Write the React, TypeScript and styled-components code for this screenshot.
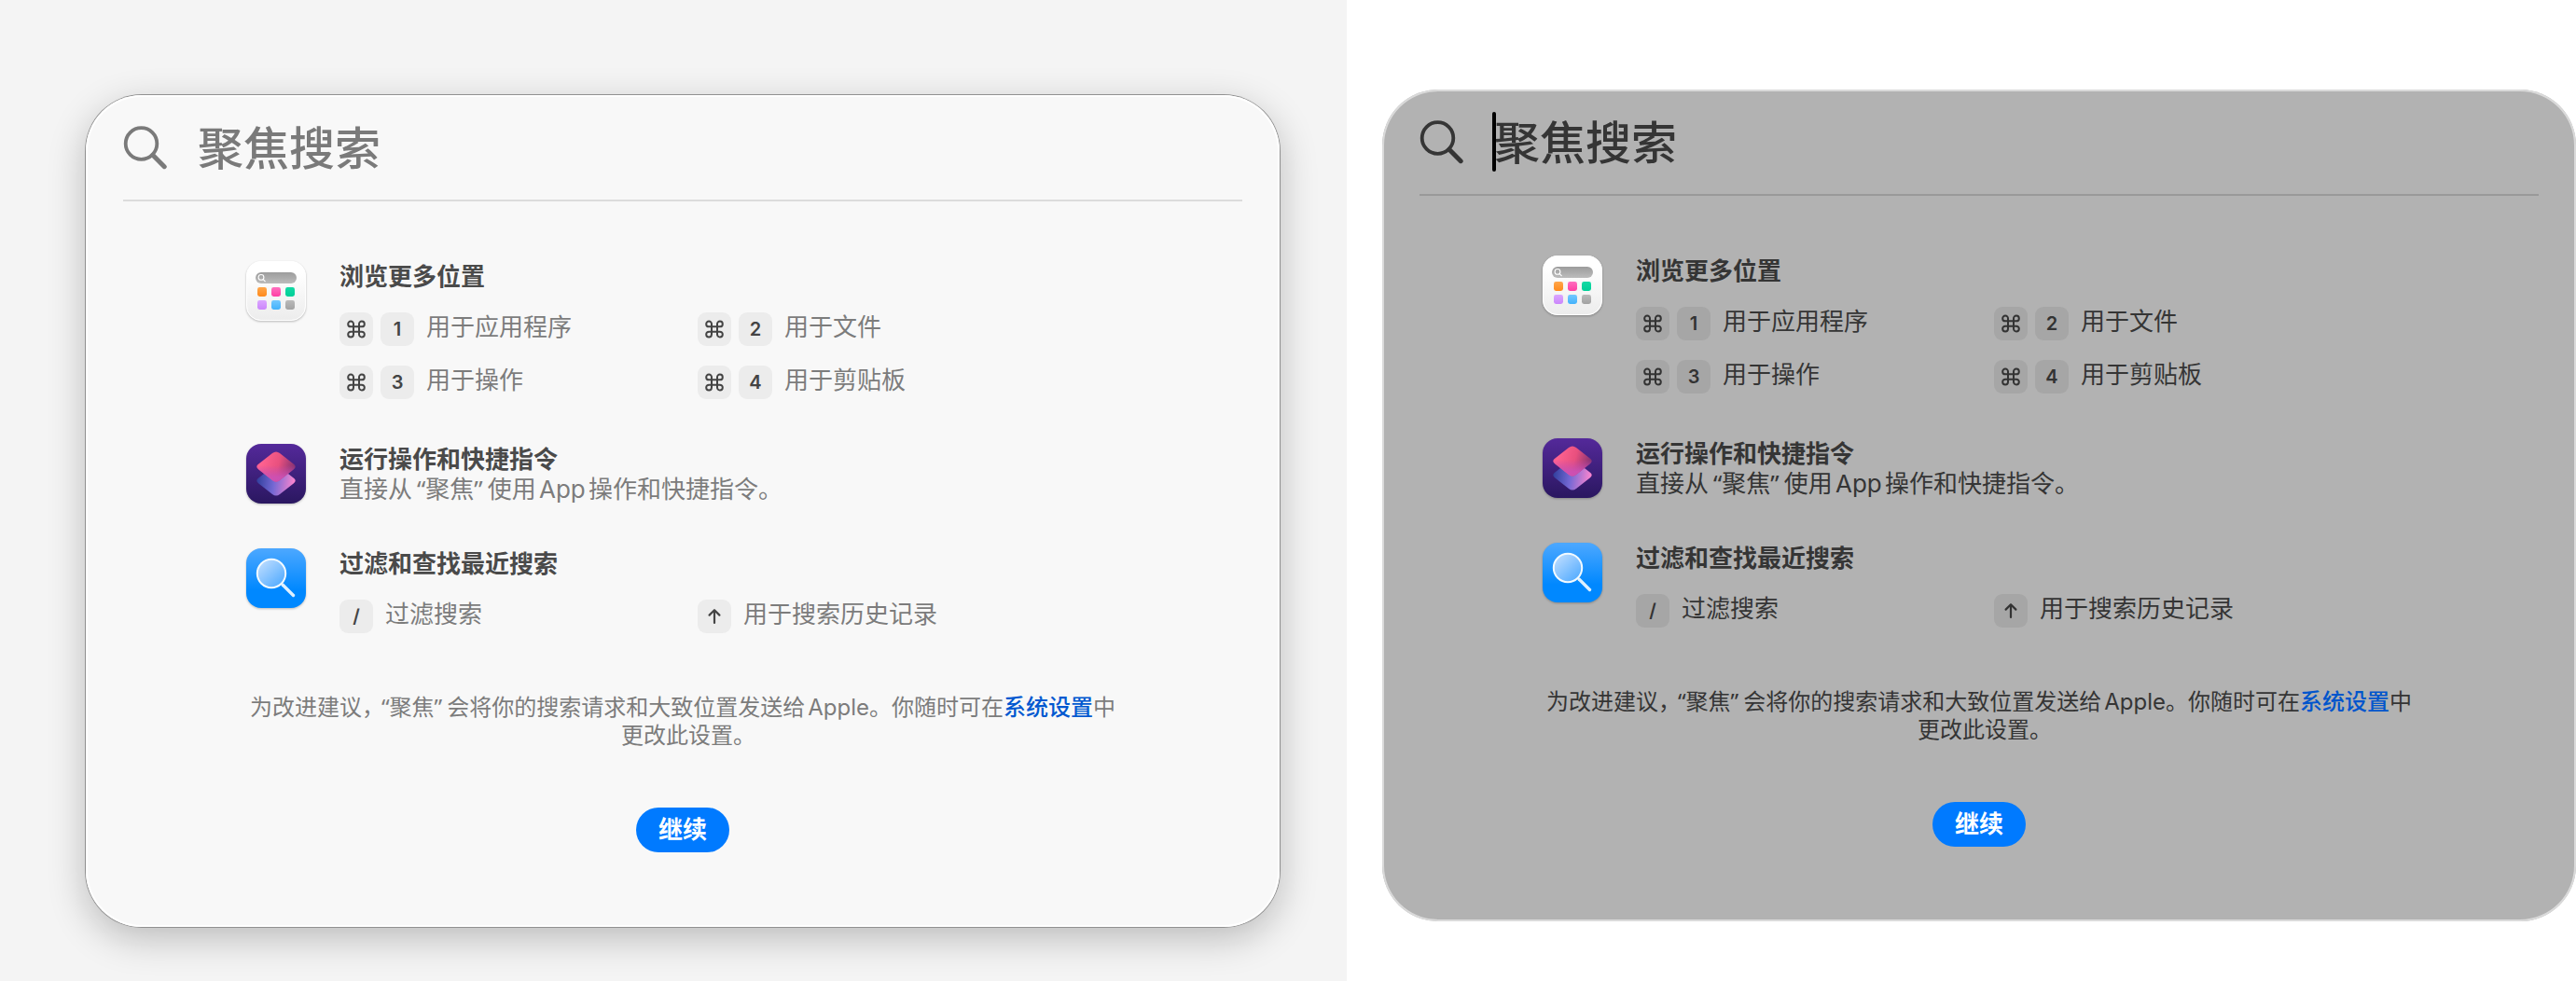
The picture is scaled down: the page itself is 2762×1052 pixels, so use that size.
import React, { useId } from "react";
import styled, { createGlobalStyle, css, ThemeProvider } from "styled-components";

type Tone = {
  pane: string;
  surface: string;
  shadow: string;
  title: string;
  text: string;
  search: string;
  rule: string;
  key: string;
  keyText: string;
  link: string;
};

const light: Tone = {
  pane: "#f4f4f4",
  surface: "#f8f8f8",
  shadow:
    "inset 0 0 0 2px #ffffff, 0 0 0 1px #909090, 0 12px 40px rgba(0, 0, 0, 0.24)",
  title: "#4a4a4a",
  text: "#7c7c7c",
  search: "#7a7a7a",
  rule: "#dcdcdc",
  key: "#ececec",
  keyText: "#444444",
  link: "#0058d0",
};

const dim: Tone = {
  pane: "#ffffff",
  surface: "#b2b2b2",
  shadow: "inset 0 0 0 2px #dadada",
  title: "#353535",
  text: "#353535",
  search: "#353535",
  rule: "#999999",
  key: "#a6a6a6",
  keyText: "#333333",
  link: "#0055cc",
};

const GlobalStyle = createGlobalStyle`
  *, *::before, *::after { box-sizing: border-box; }
  body {
    margin: 0;
    font-family: Inter, "Noto Sans CJK SC", sans-serif;
    text-autospace: normal;
  }
  h2, p, ul { margin: 0; padding: 0; }
`;

const Page = styled.main`
  display: grid;
  grid-template-columns: 1444fr 1318fr;
  min-height: 100vh;
`;

const Pane = styled.section<{ $inset: string }>`
  padding: ${(p) => p.$inset};
  background: ${(p) => (p.theme as Tone).pane};
`;

const Panel = styled.div`
  padding: 0 40px 80px;
  border-radius: 60px;
  background: ${(p) => (p.theme as Tone).surface};
  box-shadow: ${(p) => (p.theme as Tone).shadow};
`;

const SearchBar = styled.label`
  display: flex;
  align-items: center;
  gap: 30px;
  height: 114px;
  border-bottom: 2px solid ${(p) => (p.theme as Tone).rule};
  color: ${(p) => (p.theme as Tone).search};
`;

const Field = styled.span<{ $caret: boolean }>`
  position: relative;
  flex: 1;
  padding-left: 2px;
  ${(p) =>
    p.$caret &&
    css`
      &::before {
        content: "";
        position: absolute;
        top: 0;
        left: 0;
        width: 4px;
        height: 64px;
        border-radius: 2px;
        background: #000000;
      }
    `}
`;

const SearchInput = styled.input`
  display: block;
  width: 100%;
  height: 64px;
  padding: 2px 0 0;
  border: 0;
  outline: 0;
  background: transparent;
  color: inherit;
  font: 500 49px/62px Inter, "Noto Sans CJK SC", sans-serif;
  &::placeholder {
    color: inherit;
    opacity: 1;
  }
`;

const Content = styled.div`
  display: flex;
  flex-direction: column;
  align-items: center;
  max-width: 936px;
  margin: 0 auto;
  padding-top: 64px;
`;

const Sections = styled.div`
  display: flex;
  flex-direction: column;
  gap: 48px;
  width: 100%;
`;

const Section = styled.article`
  display: flex;
  gap: 36px;
`;

const SectionBody = styled.div`
  flex: 1;
`;

const Title = styled.h2`
  color: ${(p) => (p.theme as Tone).title};
  font-size: 26px;
  font-weight: 700;
  line-height: 34px;
`;

const Description = styled.p`
  color: ${(p) => (p.theme as Tone).text};
  font-size: 26px;
  line-height: 30px;
`;

const Shortcuts = styled.ul`
  display: grid;
  grid-template-columns: repeat(2, 384px);
  row-gap: 21px;
  margin-top: 21px;
  list-style: none;
`;

const Shortcut = styled.li`
  display: flex;
  gap: 8px;
  height: 36px;
`;

const Key = styled.kbd`
  display: flex;
  align-items: center;
  justify-content: center;
  width: 36px;
  height: 36px;
  border-radius: 9px;
  background: ${(p) => (p.theme as Tone).key};
  color: ${(p) => (p.theme as Tone).keyText};
  font: 600 20px/36px Inter, sans-serif;
`;

const ShortcutLabel = styled.span`
  margin-left: 5px;
  color: ${(p) => (p.theme as Tone).text};
  font-size: 26px;
  line-height: 32px;
`;

const Notice = styled.p`
  margin-top: 65px;
  color: ${(p) => (p.theme as Tone).text};
  font-size: 24px;
  line-height: 30px;
  text-align: center;
`;

const Quoted = styled.span`
  margin: 0 5px;
  font-family: "Noto Sans", "Noto Sans CJK SC", sans-serif;
  line-height: 1;
`;

const HalfWidth = styled.span`
  font-family: "Noto Sans CJK SC", sans-serif;
  font-feature-settings: "halt";
  line-height: 1;
`;

const Comma = styled(HalfWidth)`
  margin-right: 4px;
`;

const SettingsLink = styled.a`
  color: ${(p) => (p.theme as Tone).link};
  font-weight: 500;
  text-decoration: none;
`;

const ContinueButton = styled.button`
  width: 100px;
  height: 48px;
  margin-top: 62px;
  padding: 0;
  border: 0;
  border-radius: 24px;
  background: #007aff;
  color: #ffffff;
  font: 700 26px/48px Inter, "Noto Sans CJK SC", sans-serif;
`;

const AppIcon = styled.svg`
  flex: none;
  display: block;
  width: 64px;
  height: 64px;
  overflow: visible;
  filter: drop-shadow(0 1px 1px rgba(0, 0, 0, 0.25));
`;

const SearchGlyph = () => (
  <svg width="48" height="48" viewBox="0 0 48 48" fill="none" stroke="currentColor" aria-hidden="true">
    <circle cx="19.5" cy="20" r="16.8" strokeWidth="3.8" />
    <path d="M31.8 32.3 44.2 44.7" strokeWidth="5" strokeLinecap="round" />
  </svg>
);

const CommandGlyph = () => (
  <svg width="24" height="24" viewBox="0 0 24 24" fill="none" stroke="currentColor" strokeWidth="2" aria-label="Command">
    <path d="M15 6.4v11.2a2.9 2.9 0 1 0 2.9-2.9H6.1a2.9 2.9 0 1 0 2.9 2.9V6.4a2.9 2.9 0 1 0-2.9 2.9h11.8A2.9 2.9 0 1 0 15 6.4" />
  </svg>
);

const UpGlyph = () => (
  <svg width="16" height="18" viewBox="0 0 16 18" fill="none" stroke="currentColor" strokeWidth="2.2" strokeLinecap="round" strokeLinejoin="round" aria-label="Up">
    <path d="M8 16V2.4M2.6 7.6 8 2.2l5.4 5.4" />
  </svg>
);

const tiles = [
  { x: 12, y: 28, from: "#ffa64a", to: "#ff8a1c" },
  { x: 27, y: 28, from: "#ff6fbf", to: "#ff3fa4" },
  { x: 42, y: 28, from: "#14d9a4", to: "#00cf98" },
  { x: 12, y: 42, from: "#dba6ff", to: "#cb86fb" },
  { x: 27, y: 42, from: "#74c8ff", to: "#43b2fb" },
  { x: 42, y: 42, from: "#bababa", to: "#a2a2a2" },
];

const LauncherIcon = () => {
  const id = useId();
  return (
    <AppIcon viewBox="0 0 64 64" aria-hidden="true">
      <defs>
        <linearGradient id={id + "bg"} x1="0" y1="0" x2="0" y2="1">
          <stop offset="0.2" stopColor="#ffffff" />
          <stop offset="1" stopColor="#ececec" />
        </linearGradient>
        <linearGradient id={id + "bar"} x1="0" y1="0" x2="0" y2="1">
          <stop offset="0" stopColor="#9c9c9c" />
          <stop offset="1" stopColor="#bcbcbc" />
        </linearGradient>
        {tiles.map((t, i) => (
          <linearGradient key={i} id={id + i} x1="0" y1="0" x2="0" y2="1">
            <stop offset="0" stopColor={t.from} />
            <stop offset="1" stopColor={t.to} />
          </linearGradient>
        ))}
      </defs>
      <rect width="64" height="64" rx="16" fill={`url(#${id}bg)`} />
      <rect x="0.5" y="0.5" width="63" height="63" rx="15.5" fill="none" stroke="#ffffff" />
      <rect x="10" y="12" width="44" height="12" rx="6" fill={`url(#${id}bar)`} />
      <circle cx="16" cy="17.4" r="2.9" fill="none" stroke="#ffffff" strokeWidth="1.1" />
      <path d="m18.2 19.6 2 2" stroke="#ffffff" strokeWidth="1.2" strokeLinecap="round" />
      {tiles.map((t, i) => (
        <rect key={i} x={t.x} y={t.y} width="10" height="10" rx="2.4" fill={`url(#${id}${i})`} />
      ))}
    </AppIcon>
  );
};

const ShortcutsIcon = () => {
  const id = useId();
  const upper =
    "M36 10 51 21.800q3.400 2.700 0 5.400L36 39q-4 3.200-8 0L13 27.200q-3.400-2.700 0-5.400L28 10q4-3.200 8 0Z";
  return (
    <AppIcon viewBox="0 0 64 64" aria-hidden="true">
      <defs>
        <linearGradient id={id + "bg"} x1="0" y1="0" x2="0" y2="1">
          <stop offset="0" stopColor="#54299a" />
          <stop offset="1" stopColor="#2a1760" />
        </linearGradient>
        <linearGradient id={id + "low"} x1="0" y1="0.4" x2="1" y2="0.5">
          <stop offset="0" stopColor="#2f3f9c" />
          <stop offset="0.45" stopColor="#7468d4" />
          <stop offset="1" stopColor="#ff86cf" />
        </linearGradient>
        <linearGradient id={id + "top"} x1="0.1" y1="0.4" x2="1" y2="0.6">
          <stop offset="0" stopColor="#ff6290" />
          <stop offset="0.5" stopColor="#e8507e" />
          <stop offset="1" stopColor="#7c2f72" />
        </linearGradient>
        <linearGradient id={id + "mix"} x1="0" y1="0" x2="0" y2="1">
          <stop offset="0.45" stopColor="#c24bb0" stopOpacity="0" />
          <stop offset="0.85" stopColor="#cc50b4" stopOpacity="0.95" />
        </linearGradient>
      </defs>
      <rect width="64" height="64" rx="16" fill={`url(#${id}bg)`} />
      <path d={upper} transform="translate(0 15)" fill={`url(#${id}low)`} />
      <path d={upper} fill={`url(#${id}top)`} />
      <path d={upper} fill={`url(#${id}mix)`} />
    </AppIcon>
  );
};

const FinderIcon = () => {
  const id = useId();
  return (
    <AppIcon viewBox="0 0 64 64" aria-hidden="true">
      <defs>
        <linearGradient id={id + "bg"} x1="0" y1="0" x2="0" y2="1">
          <stop offset="0" stopColor="#4da8ff" />
          <stop offset="0.7" stopColor="#0088ff" />
        </linearGradient>
        <linearGradient id={id + "lens"} x1="0.1" y1="0.1" x2="0.8" y2="0.9">
          <stop offset="0" stopColor="#bcdcff" />
          <stop offset="1" stopColor="#58aeff" />
        </linearGradient>
      </defs>
      <rect width="64" height="64" rx="16" fill={`url(#${id}bg)`} />
      <path d="M39 39 50.500 50.500" stroke="#dff1ff" strokeWidth="3.400" strokeLinecap="round" />
      <circle cx="27" cy="27" r="15.200" fill={`url(#${id}lens)`} stroke="#f2faff" strokeWidth="2" />
    </AppIcon>
  );
};

type ShortcutProps = { keys: React.ReactNode[]; label: string };

const ShortcutItem = ({ keys, label }: ShortcutProps) => (
  <Shortcut>
    {keys.map((k, i) => (
      <Key key={i}>{k}</Key>
    ))}
    <ShortcutLabel>{label}</ShortcutLabel>
  </Shortcut>
);

const places = ["用于应用程序", "用于文件", "用于操作", "用于剪贴板"];

const Spotlight = ({ caret = false }: { caret?: boolean }) => (
  <Panel>
    <SearchBar>
      <SearchGlyph />
      <Field $caret={caret}>
        <SearchInput type="text" placeholder="聚焦搜索" aria-label="聚焦搜索" />
      </Field>
    </SearchBar>
    <Content>
      <Sections>
        <Section>
          <LauncherIcon />
          <SectionBody>
            <Title>浏览更多位置</Title>
            <Shortcuts>
              {places.map((label, i) => (
                <ShortcutItem key={label} keys={[<CommandGlyph />, i + 1]} label={label} />
              ))}
            </Shortcuts>
          </SectionBody>
        </Section>
        <Section>
          <ShortcutsIcon />
          <SectionBody>
            <Title>运行操作和快捷指令</Title>
            <Description>
              直接从<Quoted>“聚焦”</Quoted>使用App操作和快捷指令。
            </Description>
          </SectionBody>
        </Section>
        <Section>
          <FinderIcon />
          <SectionBody>
            <Title>过滤和查找最近搜索</Title>
            <Shortcuts>
              <ShortcutItem keys={["/"]} label="过滤搜索" />
              <ShortcutItem keys={[<UpGlyph />]} label="用于搜索历史记录" />
            </Shortcuts>
          </SectionBody>
        </Section>
      </Sections>
      <Notice>
        为改进建议<Comma>，</Comma>
        <Quoted>“聚焦”</Quoted>会将你的搜索请求和大致位置发送给Apple。你随时可在
        <SettingsLink href="#settings">系统设置</SettingsLink>中更改此设置<HalfWidth>。</HalfWidth>
      </Notice>
      <ContinueButton type="button">继续</ContinueButton>
    </Content>
  </Panel>
);

export default function App() {
  return (
    <>
      <GlobalStyle />
      <Page>
        <ThemeProvider theme={light}>
          <Pane $inset="102px 72px 58px 92px">
            <Spotlight />
          </Pane>
        </ThemeProvider>
        <ThemeProvider theme={dim}>
          <Pane $inset="96px 0 64px 38px">
            <Spotlight caret />
          </Pane>
        </ThemeProvider>
      </Page>
    </>
  );
}
